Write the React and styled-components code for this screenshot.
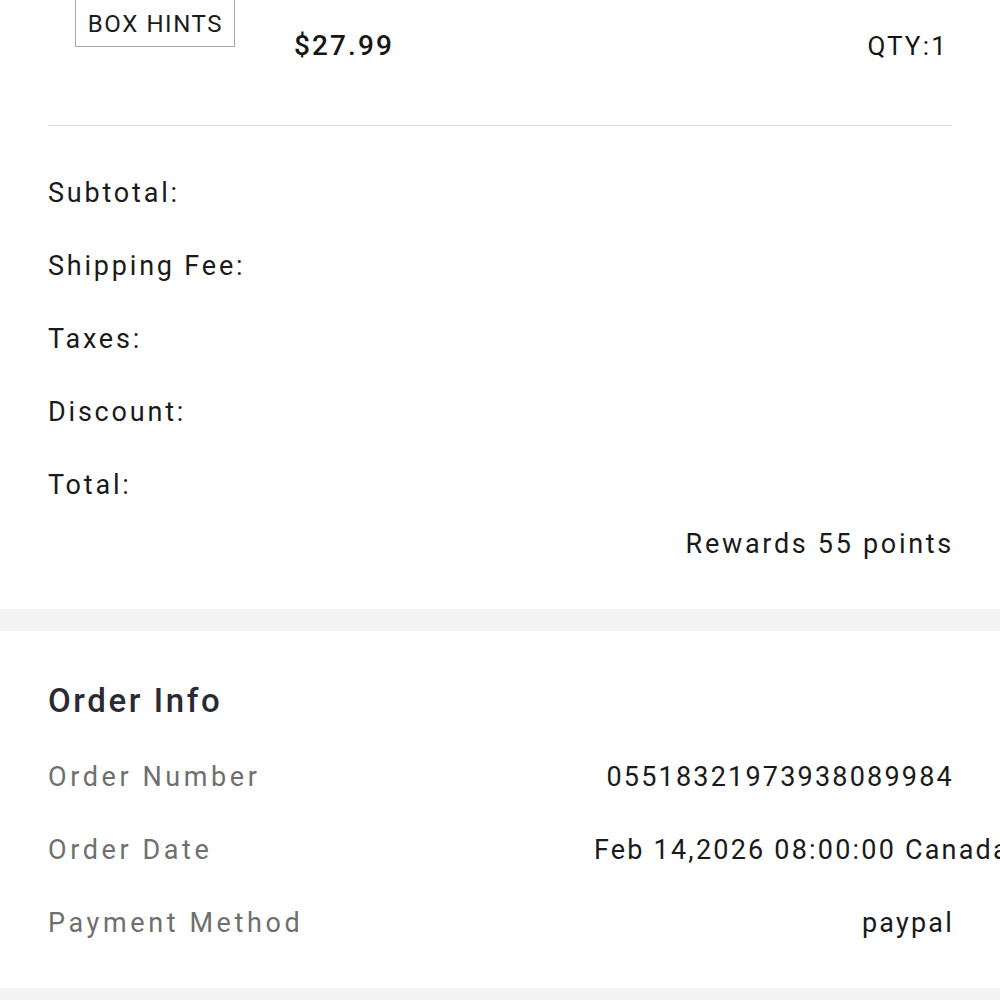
import styled, {createGlobalStyle} from "styled-components";

const GlobalStyle = createGlobalStyle`
  html, body {
    margin: 0;
    padding: 0;
    background: #ffffff;
    overflow: hidden;
  }
  body {
    font-family: Roboto, "Liberation Sans", sans-serif;
    color: #161616;
  }
`;

const StyledPage = styled.div`
  width: 1000px;
  height: 1000px;
  overflow: hidden;
  background: #ffffff;
`;

const StyledSection = styled.section`
  padding: 0 48px;
  background: #ffffff;
`;

const StyledItemRow = styled.div`
  display: flex;
  align-items: flex-start;
  height: 126px;
  border-bottom: 1px solid #dcdcdc;
  box-sizing: border-box;
`;

const StyledThumbColumn = styled.div`
  width: 214px;
  display: flex;
  justify-content: center;
  margin-top: -6px;
`;

const StyledTag = styled.span`
  border: 1px solid #a9a9a9;
  padding: 15px 11px 8px 12px;
  font-size: 24px;
  line-height: 28px;
  letter-spacing: 1.6px;
  color: #1c1c1c;
`;

const StyledPrice = styled.p`
  margin: 28px 0 0 32px;
  font-size: 28px;
  line-height: 36px;
  font-weight: 500;
  letter-spacing: 2.1px;
`;

const StyledQty = styled.p`
  margin: 28px 4px 0 auto;
  font-size: 26px;
  line-height: 36px;
  letter-spacing: 2.2px;
`;

const StyledSummary = styled.div`
  padding: 30px 0 42px;
`;

const StyledSummaryRow = styled.div`
  display: flex;
  align-items: center;
  justify-content: space-between;
  height: 73px;
  font-size: 27px;
  letter-spacing: 2.8px;
  color: #1a1a1a;
`;

const StyledRewards = styled.p`
  margin: 0 -2px 0 0;
  text-align: right;
  font-size: 27px;
  line-height: 46px;
  letter-spacing: 2.7px;
  color: #1a1a1a;
`;

const StyledBand = styled.div`
  height: 22px;
  background: #f4f4f4;
`;

const StyledInfo = styled.div`
  padding: 49px 0 29px;
`;

const StyledHeading = styled.h2`
  margin: 0 0 18px;
  font-size: 33px;
  line-height: 42px;
  font-weight: 500;
  letter-spacing: 2.6px;
  color: #2a2a34;
`;

const StyledInfoRow = styled.div`
  display: flex;
  align-items: center;
  justify-content: space-between;
  height: 73px;
  font-size: 27px;
`;

const StyledInfoLabel = styled.span`
  color: #6f6f6f;
  white-space: nowrap;
  letter-spacing: 3.6px;
`;

const StyledInfoValue = styled.span`
  color: #1a1a1a;
  white-space: nowrap;
  letter-spacing: 2.2px;
  margin-right: -2px;
  min-width: 0;
  flex: ${props => props.$anchored ? "0 0 360px" : "0 0 auto"};
  text-align: ${props => props.$anchored ? "left" : "right"};
`;

const summaryLabels = ["Subtotal:", "Shipping Fee:", "Taxes:", "Discount:", "Total:"];

const orderInfo = [
    {label: "Order Number", value: "05518321973938089984"},
    {label: "Order Date", value: "Feb 14,2026 08:00:00 Canada", anchored: true},
    {label: "Payment Method", value: "paypal"},
];

function App() {
    return (
        <StyledPage>
            <GlobalStyle/>
            <StyledSection>
                <StyledItemRow>
                    <StyledThumbColumn>
                        <StyledTag>BOX HINTS</StyledTag>
                    </StyledThumbColumn>
                    <StyledPrice>$27.99</StyledPrice>
                    <StyledQty>QTY:1</StyledQty>
                </StyledItemRow>
                <StyledSummary>
                    {summaryLabels.map(label => (
                        <StyledSummaryRow key={label}>
                            <span>{label}</span>
                            <span></span>
                        </StyledSummaryRow>
                    ))}
                    <StyledRewards>Rewards 55 points</StyledRewards>
                </StyledSummary>
            </StyledSection>
            <StyledBand/>
            <StyledSection>
                <StyledInfo>
                    <StyledHeading>Order Info</StyledHeading>
                    {orderInfo.map(row => (
                        <StyledInfoRow key={row.label}>
                            <StyledInfoLabel>{row.label}</StyledInfoLabel>
                            <StyledInfoValue $anchored={row.anchored}>{row.value}</StyledInfoValue>
                        </StyledInfoRow>
                    ))}
                </StyledInfo>
            </StyledSection>
            <StyledBand/>
        </StyledPage>
    );
}

export default App;
